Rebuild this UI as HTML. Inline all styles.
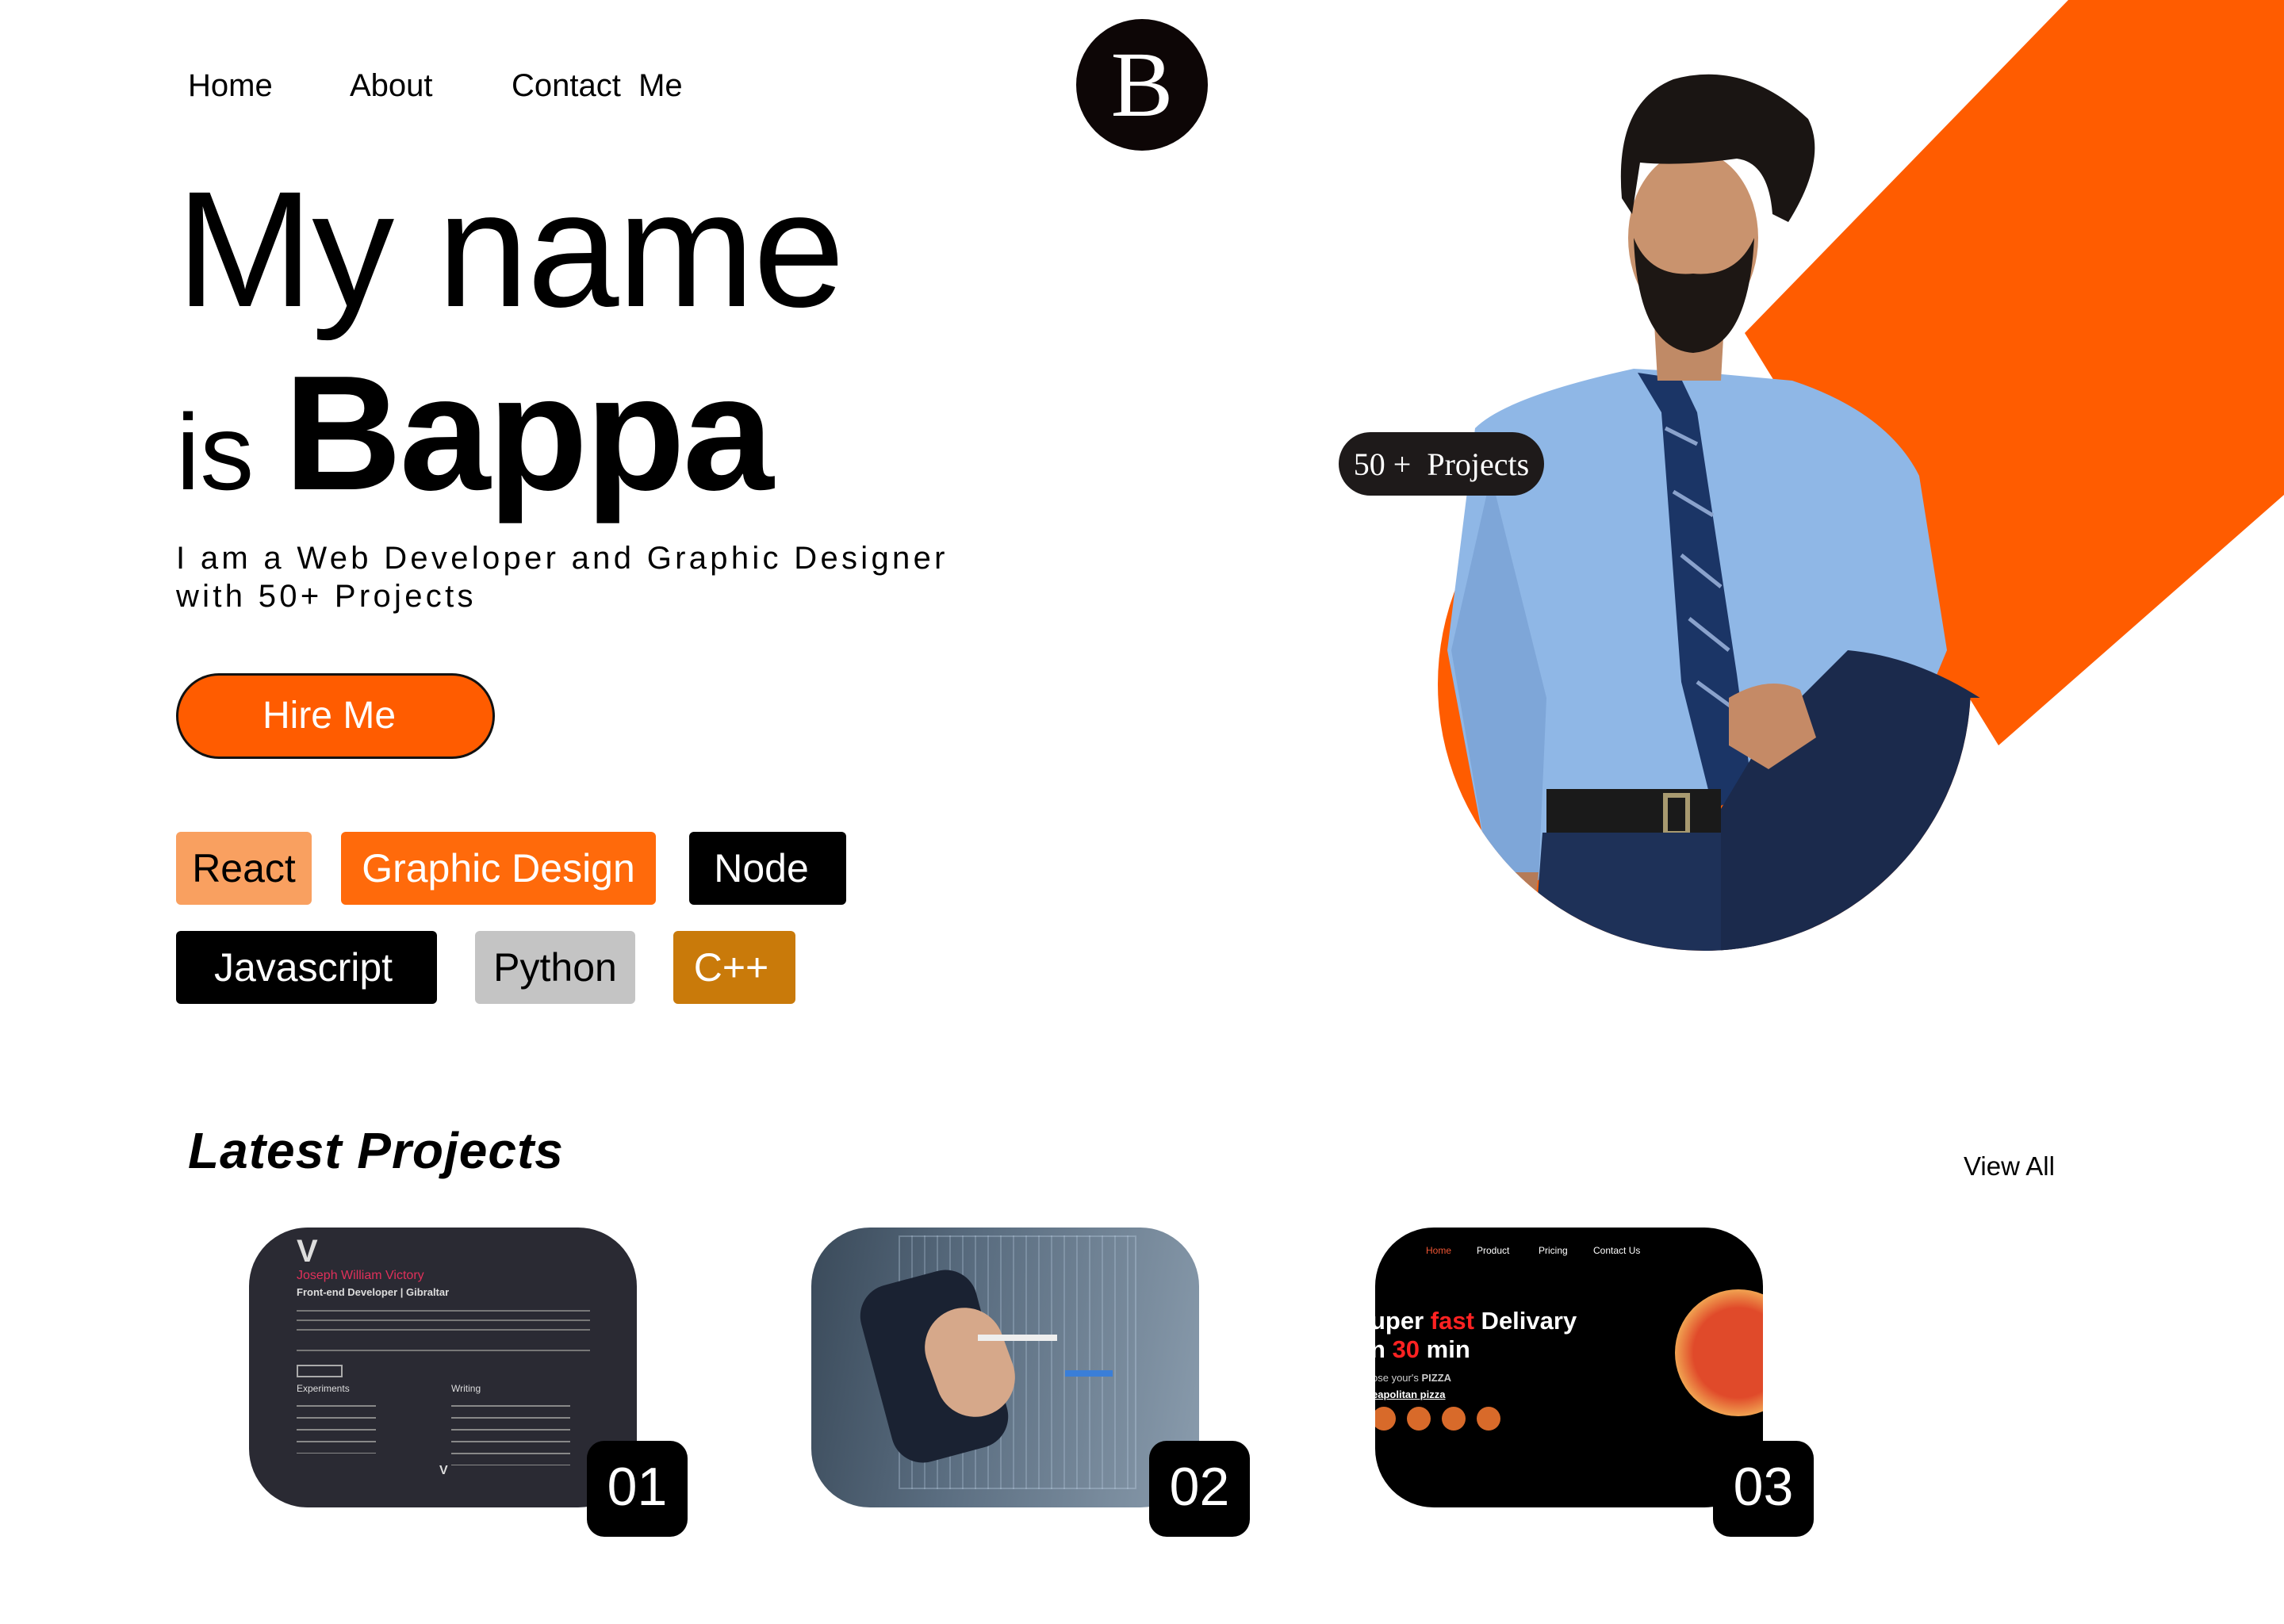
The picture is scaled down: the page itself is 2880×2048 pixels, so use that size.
<!DOCTYPE html>
<html><head><meta charset="utf-8"><style>
*{margin:0;padding:0;box-sizing:border-box}
body{width:2880px;height:2048px;background:#fff;position:relative;overflow:hidden;font-family:"Liberation Sans",sans-serif;color:#000}
.a{position:absolute;white-space:nowrap}
.nav{font-size:40px;top:86px}
.tag{position:absolute;height:92px;line-height:92px;font-size:50px;text-align:center;border-radius:6px}
.card{position:absolute;top:1548px;width:489px;height:353px;border-radius:74px;overflow:hidden}
.badge{position:absolute;top:1817px;width:127px;height:121px;background:#000;border-radius:22px;color:#fff;font-size:68px;line-height:116px;text-align:center}
.sm{position:absolute;color:#ddd;white-space:nowrap}
</style></head><body>
<svg class="a" style="left:0;top:0" width="2880" height="2048" viewBox="0 0 2880 2048">
<defs><clipPath id="cc"><circle cx="2149" cy="863" r="336"/><rect x="1700" y="0" width="800" height="880"/></clipPath></defs>
<polygon points="2608,0 2880,0 2880,624 2520,940 2200,420" fill="#ff5c00"/>
<circle cx="2149" cy="863" r="336" fill="#ff5c00"/>
<g clip-path="url(#cc)">
<path d="M1860,540 Q1900,500 2060,465 L2150,470 L2260,480 Q2380,520 2420,600 L2455,820 L2430,880 L2340,860 L2320,1000 L2130,1010 L1960,1010 L1940,1110 L1880,1110 L1825,820 Z" fill="#8fb7e6"/>
<path d="M1880,600 L1830,820 L1880,1110 L1940,1110 L1950,880 Z" fill="#7ea6d8"/>
<path d="M2065,470 L2120,478 L2140,520 L2190,850 L2210,1000 L2160,1020 L2120,860 L2095,520 Z" fill="#1b3566"/>
<path d="M2100,540 L2140,560 M2110,620 L2160,650 M2120,700 L2170,740 M2130,780 L2180,820 M2140,860 L2195,900" stroke="#8aa2cc" stroke-width="5"/>
<rect x="1950" y="995" width="220" height="55" fill="#1a1a1a"/>
<rect x="2100" y="1003" width="28" height="48" fill="none" stroke="#a89a70" stroke-width="6"/>
<path d="M1945,1050 L2200,1050 L2230,1250 L1930,1250 Z" fill="#1e3158"/>
<path d="M2330,820 Q2440,830 2545,915 L2420,1120 L2300,1210 L2170,1220 L2170,1020 L2230,920 Z" fill="#1b2a4c"/>
<path d="M2180,880 Q2230,850 2270,870 L2290,930 L2230,970 L2180,940 Z" fill="#c58a66"/>
<path d="M1880,1100 L1940,1100 L1935,1150 L1895,1160 Z" fill="#b57b58"/>
</g>
<path d="M2085,390 L2175,390 L2170,480 L2090,480 Z" fill="#c08a66"/>
<ellipse cx="2135" cy="300" rx="82" ry="110" fill="#c9936e"/>
<path d="M2060,300 Q2065,440 2135,445 Q2205,440 2212,300 Q2190,350 2135,345 Q2080,350 2060,300 Z" fill="#1d1714"/>
<path d="M2045,250 Q2035,130 2110,100 Q2200,75 2280,150 Q2305,200 2255,280 L2235,270 Q2230,205 2190,200 Q2120,210 2068,205 L2058,270 Z" fill="#1a1513"/>
</svg>
<div class="nav a" style="left:237px">Home</div>
<div class="nav a" style="left:441px">About</div>
<div class="nav a" style="left:645px">Contact&nbsp; Me</div>
<div class="a" style="left:1357px;top:24px;width:166px;height:166px;border-radius:50%;background:#0d0606;color:#fff;font-family:'Liberation Serif',serif;font-size:118px;line-height:166px;text-align:center">B</div>
<div class="a" style="left:222px;top:205px;font-size:208px;font-weight:500;line-height:220px;letter-spacing:-2px">My name</div>
<div class="a" style="left:222px;top:436px;font-size:136px;line-height:220px;font-weight:500">is <span style="font-size:206px;font-weight:700;letter-spacing:-3px">Bappa</span></div>
<div class="a" style="left:222px;top:680px;font-size:40px;letter-spacing:4.3px;line-height:48px">I am a Web Developer and Graphic Designer<br>with 50+ Projects</div>
<div class="a" style="left:222px;top:849px;width:402px;height:108px;border-radius:54px;background:#ff5c00;border:3px solid #111;color:#fff;font-size:48px;line-height:102px;text-align:center;text-indent:-16px">Hire Me</div>
<div class="tag" style="left:222px;top:1049px;width:171px;background:#f9a060">React</div>
<div class="tag" style="left:430px;top:1049px;width:397px;background:#ff6a0b;color:#fff">Graphic Design</div>
<div class="tag" style="left:869px;top:1049px;width:198px;background:#000;color:#fff;text-indent:-16px">Node</div>
<div class="tag" style="left:222px;top:1174px;width:329px;background:#000;color:#fff;text-indent:-8px">Javascript</div>
<div class="tag" style="left:599px;top:1174px;width:202px;background:#c4c4c4">Python</div>
<div class="tag" style="left:849px;top:1174px;width:154px;background:#c97a0a;color:#fff;text-indent:-8px">C++</div>
<div class="a" style="left:1688px;top:545px;width:259px;height:80px;border-radius:40px;background:#1e1a1a;color:#fff;font-family:'Liberation Serif',serif;font-size:40px;line-height:82px;text-align:center">50 +&nbsp; Projects</div>
<div class="a" style="left:237px;top:1414px;font-size:64px;font-weight:700;font-style:italic;letter-spacing:1px">Latest Projects</div>
<div class="a" style="left:2476px;top:1452px;font-size:33px">View All</div>
<div class="card" style="left:314px;background:#2a2a33">
<div class="sm" style="left:60px;top:8px;font-size:40px;font-weight:700">V</div>
<div class="sm" style="left:60px;top:52px;font-size:16px;color:#e0305a">Joseph William Victory</div>
<div class="sm" style="left:60px;top:74px;font-size:13px;font-weight:700">Front-end Developer | Gibraltar</div>
<div style="position:absolute;left:60px;top:100px;width:370px;height:36px;background:repeating-linear-gradient(#2a2a33 0 4px,#777 4px 6px,#2a2a33 6px 12px)"></div>
<div style="position:absolute;left:60px;top:150px;width:370px;height:14px;background:repeating-linear-gradient(#2a2a33 0 4px,#777 4px 6px,#2a2a33 6px 12px)"></div>
<div style="position:absolute;left:60px;top:173px;width:58px;height:16px;border:2px solid #aaa"></div>
<div class="sm" style="left:60px;top:196px;font-size:12px">Experiments</div>
<div class="sm" style="left:255px;top:196px;font-size:12px">Writing</div>
<div style="position:absolute;left:60px;top:215px;width:100px;height:70px;background:repeating-linear-gradient(#2a2a33 0 9px,#888 9px 11px,#2a2a33 11px 15px)"></div>
<div style="position:absolute;left:255px;top:215px;width:150px;height:85px;background:repeating-linear-gradient(#2a2a33 0 9px,#888 9px 11px,#2a2a33 11px 15px)"></div>
<div class="sm" style="left:240px;top:298px;font-size:16px;font-weight:700">V</div>
</div>
<div class="card" style="left:1023px;background:linear-gradient(100deg,#3a4a5a 0%,#5a6d80 40%,#8a9cad 100%)">
<div style="position:absolute;left:110px;top:10px;width:300px;height:320px;background:repeating-linear-gradient(90deg,transparent 0 14px,rgba(200,220,240,.25) 14px 16px);border:2px solid rgba(200,220,240,.3)"></div>
<div style="position:absolute;left:80px;top:60px;width:150px;height:230px;background:#1a2232;border-radius:40px;transform:rotate(-15deg)"></div>
<div style="position:absolute;left:150px;top:100px;width:100px;height:140px;background:#d6a88a;border-radius:50px;transform:rotate(-20deg)"></div>
<div style="position:absolute;left:210px;top:135px;width:100px;height:8px;background:#eee"></div>
<div style="position:absolute;left:320px;top:180px;width:60px;height:8px;background:#3a7ed8"></div>
</div>
<div class="card" style="left:1734px;background:#000">
<div class="sm" style="left:64px;top:22px;font-size:12px;color:#e53;">Home</div>
<div class="sm" style="left:128px;top:22px;font-size:12px;color:#fff">Product</div>
<div class="sm" style="left:206px;top:22px;font-size:12px;color:#fff">Pricing</div>
<div class="sm" style="left:275px;top:22px;font-size:12px;color:#fff">Contact Us</div>
<div class="sm" style="left:-6px;top:100px;font-size:31px;font-weight:700;color:#fff">uper <span style="color:#f22">fast</span> Delivary</div>
<div class="sm" style="left:-6px;top:136px;font-size:31px;font-weight:700;color:#fff">n <span style="color:#f22">30</span> min</div>
<div class="sm" style="left:-4px;top:182px;font-size:13px;color:#ccc">ose your's <b>PIZZA</b></div>
<div class="sm" style="left:-4px;top:203px;font-size:13px;color:#fff;font-weight:700;text-decoration:underline">eapolitan pizza</div>
<div style="position:absolute;left:-4px;top:226px;width:30px;height:30px;border-radius:50%;background:#d86a2a"></div>
<div style="position:absolute;left:40px;top:226px;width:30px;height:30px;border-radius:50%;background:#d86a2a"></div>
<div style="position:absolute;left:84px;top:226px;width:30px;height:30px;border-radius:50%;background:#d86a2a"></div>
<div style="position:absolute;left:128px;top:226px;width:30px;height:30px;border-radius:50%;background:#d86a2a"></div>
<div style="position:absolute;left:378px;top:78px;width:160px;height:160px;border-radius:50%;background:radial-gradient(#e04a2a 50%,#f0a050 70%,#d07a30 100%)"></div>
</div>
<div class="badge" style="left:740px">01</div>
<div class="badge" style="left:1449px">02</div>
<div class="badge" style="left:2160px">03</div>
</body></html>
